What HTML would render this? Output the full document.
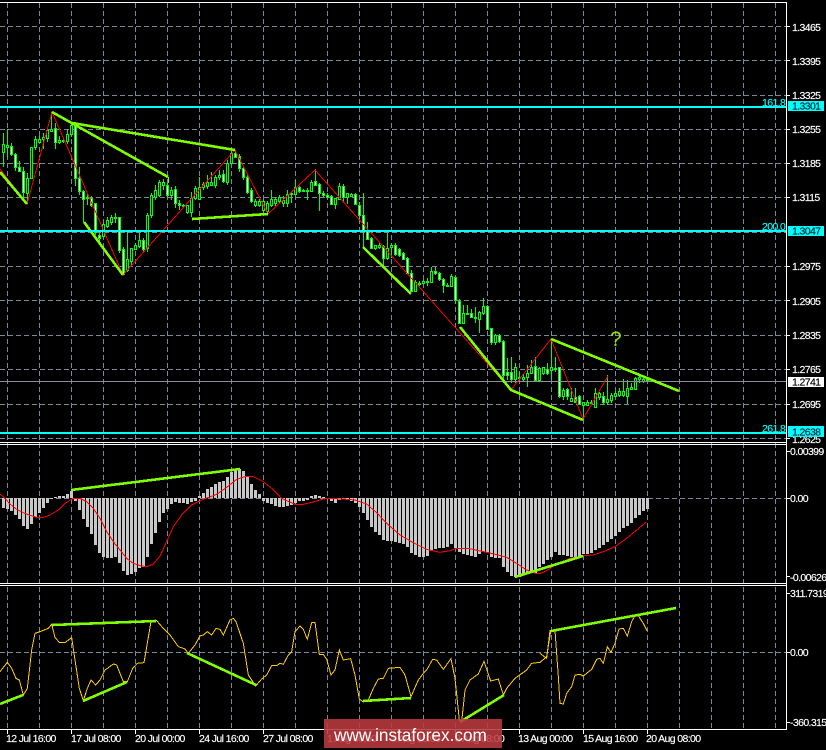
<!DOCTYPE html>
<html><head><meta charset="utf-8"><title>Chart</title>
<style>
html,body{margin:0;padding:0;background:#000;width:826px;height:750px;overflow:hidden}
svg{display:block}
text{font-family:"Liberation Sans",sans-serif;font-size:10.5px;letter-spacing:-.62px;fill:#fff;stroke:#fff;stroke-width:.15px}
.c{fill:#0ff;stroke:#0ff}.d{fill:#023;stroke:#023}
</style></head><body>
<svg width="826" height="750" viewBox="0 0 826 750" xmlns="http://www.w3.org/2000/svg">
<rect width="826" height="750" fill="#000"/>
<!-- grid -->
<path shape-rendering="crispEdges" fill="none" stroke="#778899" stroke-dasharray="5 3" d="M7.5 3V729M39.5 3V729M71.5 3V729M103.5 3V729M135.5 3V729M167.5 3V729M199.5 3V729M231.5 3V729M263.5 3V729M295.5 3V729M327.5 3V729M359.5 3V729M391.5 3V729M423.5 3V729M455.5 3V729M487.5 3V729M519.5 3V729M551.5 3V729M583.5 3V729M615.5 3V729M647.5 3V729M679.5 3V729M711.5 3V729M743.5 3V729M775.5 3V729
M0 26.5H786M0 60.5H786M0 95.5H786M0 129.5H786M0 163.5H786M0 197.5H786M0 232.5H786M0 266.5H786M0 300.5H786M0 335.5H786M0 369.5H786M0 404.5H786M0 438.5H786M0 498.5H786M0 652.5H786"/>
<!-- wicks -->
<path shape-rendering="crispEdges" fill="none" stroke="#00ff00" d="M3.5 133V167M7.5 129V157M11.5 143V156M15.5 153V171M19.5 161V172M23.5 167V198M27.5 173V203M31.5 147V178M35.5 136V150M39.5 136V143M43.5 133V149M47.5 128V142M51.5 112V132M55.5 123V149M59.5 136V144M63.5 138V143M67.5 130V144M71.5 122V137M75.5 122V186M79.5 167V195M83.5 190V222M87.5 193V205M91.5 196V207M95.5 203V235M99.5 233V245M103.5 222V237M107.5 217V228M111.5 215V225M115.5 213V223M119.5 217V253M123.5 247V275M127.5 232V272M131.5 248V265M135.5 243V250M139.5 232V248M143.5 238V252M147.5 213V252M151.5 193V218M155.5 185V200M159.5 180V197M163.5 179V190M167.5 183V198M171.5 187V200M175.5 186V208M179.5 200V210M183.5 204V207M187.5 205V214M191.5 192V217M195.5 186V200M199.5 177V200M203.5 182V190M207.5 175V189M211.5 172V186M215.5 175V188M219.5 170V180M223.5 170V183M227.5 160V185M231.5 151V165M235.5 150V158M239.5 154V172M243.5 166V180M247.5 175V194M251.5 188V203M255.5 199V207M259.5 199V207M263.5 199V212M267.5 201V213M271.5 190V207M275.5 197V206M279.5 195V203M283.5 196V207M287.5 190V207M291.5 192V203M295.5 180V195M299.5 186V193M303.5 189V192M307.5 188V200M311.5 180V192M315.5 169V186M319.5 183V211M323.5 191V197M327.5 193V198M331.5 195V205M335.5 198V209M339.5 183V200M343.5 184V202M347.5 193V204M351.5 193V197M355.5 193V205M359.5 202V222M363.5 193V247M367.5 222V239M371.5 237V249M375.5 245V250M379.5 243V249M383.5 245V267M387.5 233V260M391.5 243V258M395.5 243V256M399.5 248V257M403.5 252V260M407.5 257V273M411.5 270V292M415.5 280V292M419.5 281V286M423.5 280V284M427.5 278V286M431.5 267V283M435.5 267V275M439.5 272V281M443.5 278V293M447.5 283V286M451.5 274V287M455.5 276V304M459.5 299V323M463.5 305V324M467.5 305V315M471.5 309V318M475.5 307V323M479.5 311V333M483.5 298V315M487.5 305V330M491.5 328V345M495.5 334V345M499.5 334V343M503.5 340V383M507.5 358V380M511.5 357V383M515.5 363V383M519.5 372V380M523.5 374V382M527.5 365V387M531.5 360V374M535.5 357V382M539.5 367V381M543.5 367V375M547.5 363V375M551.5 340V380M555.5 357V372M559.5 367V398M563.5 388V400M567.5 388V400M571.5 388V402M575.5 388V403M579.5 395V405M583.5 402V420M587.5 400V406M591.5 400V405M595.5 388V408M599.5 392V400M603.5 392V405M607.5 375V405M611.5 393V403M615.5 391V397M619.5 388V397M623.5 379V397M627.5 380V404M631.5 383V390M635.5 377V390M639.5 375V383M643.5 377V383M647.5 377V382"/>
<!-- bull bodies -->
<path shape-rendering="crispEdges" fill="#000" stroke="#00ff00" d="M2.5 144.5h2V152.5h-2zM6.5 145.5h2V147.5h-2zM26.5 178.5h2V193.5h-2zM30.5 147.5h2V178.5h-2zM34.5 139.5h2V147.5h-2zM38.5 139.5h2V142.5h-2zM42.5 137.5h2V139.5h-2zM46.5 130.5h2V138.5h-2zM50.5 129.5h2V131.5h-2zM58.5 140.5h2V142.5h-2zM62.5 140.5h2V141.5h-2zM66.5 134.5h2V141.5h-2zM70.5 125.5h2V134.5h-2zM86.5 197.5h2V198.5h-2zM102.5 224.5h2V236.5h-2zM106.5 220.5h2V226.5h-2zM110.5 217.5h2V222.5h-2zM114.5 217.5h2V218.5h-2zM126.5 259.5h2V270.5h-2zM130.5 248.5h2V261.5h-2zM134.5 245.5h2V249.5h-2zM138.5 240.5h2V246.5h-2zM146.5 215.5h2V248.5h-2zM150.5 195.5h2V215.5h-2zM154.5 190.5h2V197.5h-2zM158.5 182.5h2V195.5h-2zM162.5 182.5h2V185.5h-2zM170.5 190.5h2V195.5h-2zM182.5 205.5h2V206.5h-2zM186.5 205.5h2V212.5h-2zM190.5 198.5h2V212.5h-2zM194.5 188.5h2V198.5h-2zM198.5 187.5h2V199.5h-2zM202.5 184.5h2V187.5h-2zM206.5 182.5h2V186.5h-2zM210.5 182.5h2V185.5h-2zM214.5 177.5h2V185.5h-2zM218.5 175.5h2V177.5h-2zM226.5 163.5h2V182.5h-2zM230.5 153.5h2V163.5h-2zM254.5 201.5h2V205.5h-2zM258.5 201.5h2V205.5h-2zM262.5 201.5h2V210.5h-2zM266.5 203.5h2V211.5h-2zM270.5 199.5h2V205.5h-2zM274.5 199.5h2V203.5h-2zM278.5 197.5h2V201.5h-2zM282.5 200.5h2V203.5h-2zM286.5 194.5h2V203.5h-2zM290.5 193.5h2V194.5h-2zM294.5 187.5h2V194.5h-2zM302.5 190.5h2V191.5h-2zM306.5 190.5h2V191.5h-2zM310.5 182.5h2V191.5h-2zM334.5 198.5h2V204.5h-2zM338.5 186.5h2V199.5h-2zM346.5 193.5h2V197.5h-2zM350.5 194.5h2V196.5h-2zM374.5 245.5h2V248.5h-2zM378.5 245.5h2V247.5h-2zM386.5 248.5h2V258.5h-2zM390.5 245.5h2V247.5h-2zM414.5 282.5h2V291.5h-2zM418.5 283.5h2V284.5h-2zM422.5 281.5h2V283.5h-2zM426.5 281.5h2V282.5h-2zM430.5 271.5h2V282.5h-2zM446.5 285.5h2V286.5h-2zM450.5 276.5h2V286.5h-2zM462.5 313.5h2V323.5h-2zM466.5 313.5h2V314.5h-2zM474.5 317.5h2V318.5h-2zM478.5 312.5h2V319.5h-2zM482.5 306.5h2V313.5h-2zM494.5 335.5h2V342.5h-2zM514.5 367.5h2V379.5h-2zM518.5 377.5h2V378.5h-2zM522.5 377.5h2V379.5h-2zM526.5 373.5h2V377.5h-2zM530.5 367.5h2V373.5h-2zM538.5 368.5h2V380.5h-2zM542.5 367.5h2V373.5h-2zM550.5 367.5h2V370.5h-2zM554.5 368.5h2V369.5h-2zM562.5 390.5h2V396.5h-2zM570.5 398.5h2V401.5h-2zM582.5 402.5h2V405.5h-2zM586.5 402.5h2V405.5h-2zM590.5 402.5h2V403.5h-2zM594.5 393.5h2V407.5h-2zM598.5 393.5h2V397.5h-2zM606.5 399.5h2V402.5h-2zM610.5 395.5h2V400.5h-2zM614.5 393.5h2V396.5h-2zM618.5 391.5h2V395.5h-2zM622.5 391.5h2V395.5h-2zM626.5 388.5h2V396.5h-2zM630.5 387.5h2V389.5h-2zM634.5 378.5h2V389.5h-2zM638.5 377.5h2V379.5h-2zM642.5 379.5h2V381.5h-2zM646.5 379.5h2V380.5h-2z"/>
<!-- bear bodies -->
<path shape-rendering="crispEdges" fill="#fff" stroke="#00ff00" d="M10.5 146.5h2V154.5h-2zM14.5 154.5h2V167.5h-2zM18.5 167.5h2V171.5h-2zM22.5 171.5h2V192.5h-2zM54.5 128.5h2V142.5h-2zM74.5 125.5h2V178.5h-2zM78.5 178.5h2V191.5h-2zM82.5 191.5h2V199.5h-2zM90.5 198.5h2V205.5h-2zM94.5 203.5h2V232.5h-2zM98.5 235.5h2V238.5h-2zM118.5 217.5h2V250.5h-2zM122.5 249.5h2V274.5h-2zM142.5 240.5h2V249.5h-2zM166.5 185.5h2V195.5h-2zM174.5 189.5h2V203.5h-2zM178.5 203.5h2V205.5h-2zM222.5 174.5h2V181.5h-2zM234.5 153.5h2V157.5h-2zM238.5 156.5h2V168.5h-2zM242.5 168.5h2V177.5h-2zM246.5 177.5h2V192.5h-2zM250.5 190.5h2V201.5h-2zM298.5 187.5h2V191.5h-2zM314.5 181.5h2V185.5h-2zM318.5 184.5h2V193.5h-2zM322.5 193.5h2V195.5h-2zM326.5 195.5h2V197.5h-2zM330.5 196.5h2V204.5h-2zM342.5 186.5h2V197.5h-2zM354.5 194.5h2V204.5h-2zM358.5 205.5h2V215.5h-2zM362.5 215.5h2V230.5h-2zM366.5 231.5h2V239.5h-2zM370.5 238.5h2V248.5h-2zM382.5 246.5h2V258.5h-2zM394.5 245.5h2V254.5h-2zM398.5 249.5h2V255.5h-2zM402.5 253.5h2V259.5h-2zM406.5 258.5h2V273.5h-2zM410.5 273.5h2V291.5h-2zM434.5 271.5h2V273.5h-2zM438.5 273.5h2V279.5h-2zM442.5 279.5h2V285.5h-2zM454.5 277.5h2V300.5h-2zM458.5 301.5h2V323.5h-2zM470.5 313.5h2V317.5h-2zM486.5 306.5h2V329.5h-2zM490.5 328.5h2V342.5h-2zM498.5 335.5h2V341.5h-2zM502.5 341.5h2V375.5h-2zM506.5 372.5h2V375.5h-2zM510.5 372.5h2V379.5h-2zM534.5 366.5h2V380.5h-2zM546.5 369.5h2V373.5h-2zM558.5 367.5h2V396.5h-2zM566.5 389.5h2V396.5h-2zM574.5 397.5h2V402.5h-2zM578.5 396.5h2V404.5h-2zM602.5 396.5h2V402.5h-2z"/>
<!-- gray price line -->
<path shape-rendering="crispEdges" stroke="#8a8f99" d="M0 381.5H786"/>
<!-- red zigzag -->
<polyline shape-rendering="crispEdges" fill="none" stroke="#ff0000" points="0,169 27,204 52,112 123,275 235,150 268,214 315,170 511,390 551,339 583,419 608,376"/>
<!-- green trend lines -->
<path shape-rendering="crispEdges" fill="none" stroke="#7fff00" stroke-width="2.6" d="M0 172L27 204M52 112L168 177M72 123L235 150M84 222L123 275M192 219L268 214M363 247L411 294M460 327L511 390L583 420M551 339L679 391"/>
<path shape-rendering="crispEdges" stroke="#7fff00" stroke-width="1" d="M168.500 177V183"/>
<!-- cyan levels -->
<path shape-rendering="crispEdges" stroke="#00ffff" stroke-width="2" d="M0 107H786M0 231H786M0 433H786"/>
<text x="610" y="346" style="font-size:21px;letter-spacing:0;fill:#8fe010;stroke:none">?</text>
<text class="c" x="762" y="106">161.8</text>
<text class="c" x="762" y="230">200.0</text>
<text class="c" x="762" y="432">261.8</text>
<!-- MACD bars -->
<path shape-rendering="crispEdges" fill="none" stroke="#c8c8c8" stroke-width="3" d="M3.500 498V508M7.500 498V509M11.500 498V511M15.500 498V515M19.500 498V519M23.500 498V526M27.500 498V529M31.500 498V524M35.500 498V517M39.500 498V513M43.500 498V508M47.500 498V503M51.500 498V499M55.500 498V497M59.500 498V496M63.500 498V496M67.500 498V494M71.500 498V491M75.500 498V501M79.500 498V510M83.500 498V519M87.500 498V527M91.500 498V534M95.500 498V545M99.500 498V553M103.500 498V557M107.500 498V558M111.500 498V558M115.500 498V557M119.500 498V563M123.500 498V571M127.500 498V575M131.500 498V574M135.500 498V572M139.500 498V568M143.500 498V567M147.500 498V557M151.500 498V544M155.500 498V533M159.500 498V522M163.500 498V513M167.500 498V509M171.500 498V504M175.500 498V502M179.500 498V503M183.500 498V503M187.500 498V504M191.500 498V502M195.500 498V501M199.500 498V496M203.500 498V493M207.500 498V489M211.500 498V487M215.500 498V484M219.500 498V482M223.500 498V481M227.500 498V477M231.500 498V472M235.500 498V469M239.500 498V469M243.500 498V471M247.500 498V477M251.500 498V484M255.500 498V490M259.500 498V494M263.500 498V501M267.500 498V503M271.500 498V504M275.500 498V506M279.500 498V507M283.500 498V507M287.500 498V506M291.500 498V505M295.500 498V503M299.500 498V501M303.500 498V501M307.500 498V500M311.500 498V496M315.500 498V495M319.500 498V496M323.500 498V497M327.500 498V499M331.500 498V501M335.500 498V503M339.500 498V500M343.500 498V499M347.500 498V500M351.500 498V501M355.500 498V503M359.500 498V507M363.500 498V513M367.500 498V520M371.500 498V527M375.500 498V532M379.500 498V535M383.500 498V540M387.500 498V541M391.500 498V541M395.500 498V542M399.500 498V543M403.500 498V544M407.500 498V547M411.500 498V553M415.500 498V555M419.500 498V557M423.500 498V557M427.500 498V556M431.500 498V551M435.500 498V549M439.500 498V548M443.500 498V548M447.500 498V547M451.500 498V544M455.500 498V548M459.500 498V552M463.500 498V554M467.500 498V555M471.500 498V556M475.500 498V557M479.500 498V554M483.500 498V552M487.500 498V553M491.500 498V557M495.500 498V558M499.500 498V558M503.500 498V567M507.500 498V572M511.500 498V576M515.500 498V577M519.500 498V577M523.500 498V575M527.500 498V573M531.500 498V573M535.500 498V573M539.500 498V567M543.500 498V564M547.500 498V560M551.500 498V557M555.500 498V552M559.500 498V555M563.500 498V555M567.500 498V556M571.500 498V557M575.500 498V557M579.500 498V556M583.500 498V554M587.500 498V554M591.500 498V553M595.500 498V550M599.500 498V548M603.500 498V545M607.500 498V542M611.500 498V539M615.500 498V536M619.500 498V532M623.500 498V528M627.500 498V526M631.500 498V523M635.500 498V518M639.500 498V515M643.500 498V511M647.500 498V509"/>
<!-- MACD signal -->
<g shape-rendering="crispEdges" transform="translate(0,450) scale(.33333)" fill="none" stroke="#ff0000" stroke-width="3"><polyline points="0,132 15,145 30,162 50,178 70,188 90,196 110,202 130,202 150,195 175,180 195,160 215,147 240,145 260,155 280,175 300,205 320,245 340,275 360,300 380,325 400,340 420,347 440,350 460,342 480,318 500,275 520,230 545,195 575,165 610,148 650,133 680,112 710,88 735,80 760,80 790,95 815,115 840,140"/></g>
<g shape-rendering="crispEdges" transform="translate(280,480) scale(.33333)" fill="none" stroke="#ff0000" stroke-width="3"><polyline points="0,52 20,62 45,73 70,73 95,67 120,60 140,55 190,57 225,60 260,72 290,98 320,130 360,165 400,188 440,208 480,217 510,212 530,205 565,205 600,213 625,218 650,224 680,232 710,250 740,270 770,281 780,280 800,272 825,255 850,245 870,235 910,227 940,225 970,215 1005,200 1040,175 1070,150 1100,125"/></g>
<path shape-rendering="crispEdges" fill="none" stroke="#7fff00" stroke-width="2.6" d="M71 490L240 469M515 577L583 556"/>
<!-- CCI -->
<g shape-rendering="crispEdges" transform="translate(0,600) scale(.33333)" fill="none" stroke="#ffcc00" stroke-width="3"><polyline points="0,215 22,187 35,205 48,235 58,240 70,285 82,265 95,150 105,100 120,95 145,85 155,73 165,112 178,127 195,128 215,113 225,180 238,265 250,302 262,265 273,240 287,255 300,240 315,210 340,192 350,195 370,245 382,245 398,205 412,190 432,188 453,65 470,62 490,85 510,105 535,140 555,147 565,160 585,135 600,108 610,105 622,95 635,105 648,85 660,88 670,105 690,60 700,55 708,65 730,130 745,225 767,258 785,237 800,225 815,197 830,197 840,190"/></g>
<g shape-rendering="crispEdges" transform="translate(280,600) scale(.33333)" fill="none" stroke="#ffcc00" stroke-width="3"><polyline points="0,190 10,193 25,165 35,155 45,95 60,78 70,88 82,118 95,68 105,67 118,163 130,163 140,178 153,225 165,210 178,150 190,180 212,176 225,225 238,297 250,306 265,300 280,265 295,237 310,235 325,205 360,202 375,225 393,290 415,240 430,220 440,210 458,178 470,180 490,208 513,176 525,235 538,360 545,365 555,270 570,240 595,222 612,184 632,243 655,237 670,285 680,265 705,235 740,210 755,190 780,187 800,170 812,95 814,93"/></g>
<g shape-rendering="crispEdges" transform="translate(540,600) scale(.33333)" fill="none" stroke="#ffcc00" stroke-width="3"><polyline points="0,160 20,175 30,92 45,92 55,230 60,310 70,312 80,280 95,260 105,225 120,223 130,228 155,208 170,178 180,175 190,190 202,140 213,157 225,130 237,87 250,85 262,108 275,65 285,47 295,47 310,70 321,92"/></g>
<path shape-rendering="crispEdges" fill="none" stroke="#7fff00" stroke-width="2.6" d="M0 704L23 695M52 625L156 621M83 701L127 682M187 653L256 685M363 701L411 698M460 722L504 695M551 631L676 608"/>
<!-- frame -->
<path shape-rendering="crispEdges" fill="none" stroke="#fff" d="M0 2.500H786.500V729.500H0M0 442.500H787M0 444.500H787M0 583.500H787M0 585.500H787
M787 26.500h3M787 60.500h3M787 95.500h3M787 129.500h3M787 163.500h3M787 197.500h3M787 266.500h3M787 300.500h3M787 335.500h3M787 369.500h3M787 404.500h3M787 438.500h3M787 451.500h3M787 498.500h3M787 576.500h3M787 593.500h3M787 652.500h3M787 722.500h3
M7.500 730V734M71.500 730V734M135.500 730V734M199.500 730V734M263.500 730V734M327.500 730V734M391.500 730V734M455.500 730V734M519.500 730V734M583.500 730V734M647.500 730V734"/>
<!-- price labels -->
<text x="792" y="31">1.3465</text>
<text x="792" y="65">1.3395</text>
<text x="792" y="99">1.3325</text>
<text x="792" y="133">1.3255</text>
<text x="792" y="167">1.3185</text>
<text x="792" y="201">1.3115</text>
<text x="792" y="270">1.2975</text>
<text x="792" y="305">1.2905</text>
<text x="792" y="339">1.2835</text>
<text x="792" y="373">1.2765</text>
<text x="792" y="408">1.2695</text>
<text x="792" y="443">1.2625</text>
<rect x="788" y="101" width="36" height="10" fill="#00ffff"/>
<text class="d" x="792" y="109.500">1.3301</text>
<rect x="788" y="226" width="36" height="10" fill="#00ffff"/>
<text class="d" x="792" y="234.500">1.3047</text>
<rect x="788" y="377" width="36" height="10" fill="#fff"/>
<text style="fill:#000;stroke:#000" x="792" y="385.500">1.2741</text>
<rect x="788" y="426" width="36" height="11" fill="#00ffff"/>
<text class="d" x="792" y="435.500">1.2638</text>
<text x="790" y="455">0.00399</text>
<text x="790" y="502">0.00</text>
<text x="790" y="581">-0.00626</text>
<text x="790" y="597">311.7319</text>
<text x="790" y="656">0.00</text>
<text x="790" y="726">-360.315</text>
<!-- time labels -->
<text x="6" y="742">12 Jul 16:00</text>
<text x="71" y="742">17 Jul 08:00</text>
<text x="135" y="742">20 Jul 00:00</text>
<text x="199" y="742">24 Jul 16:00</text>
<text x="263" y="742">27 Jul 08:00</text>
<text x="327" y="742">1 Aug 00:00</text>
<text x="391" y="742">3 Aug 16:00</text>
<text x="455" y="742">8 Aug 08:00</text>
<text x="518" y="742">13 Aug 00:00</text>
<text x="583" y="742">15 Aug 16:00</text>
<text x="646" y="742">20 Aug 08:00</text>
<!-- watermark -->
<rect x="324" y="719" width="178" height="29" fill="#bb3a40" fill-opacity=".88"/>
<text x="334" y="741" style="font-size:17.2px;letter-spacing:0;fill:#fff;stroke:none">www.instaforex.com</text>
</svg>
</body></html>
